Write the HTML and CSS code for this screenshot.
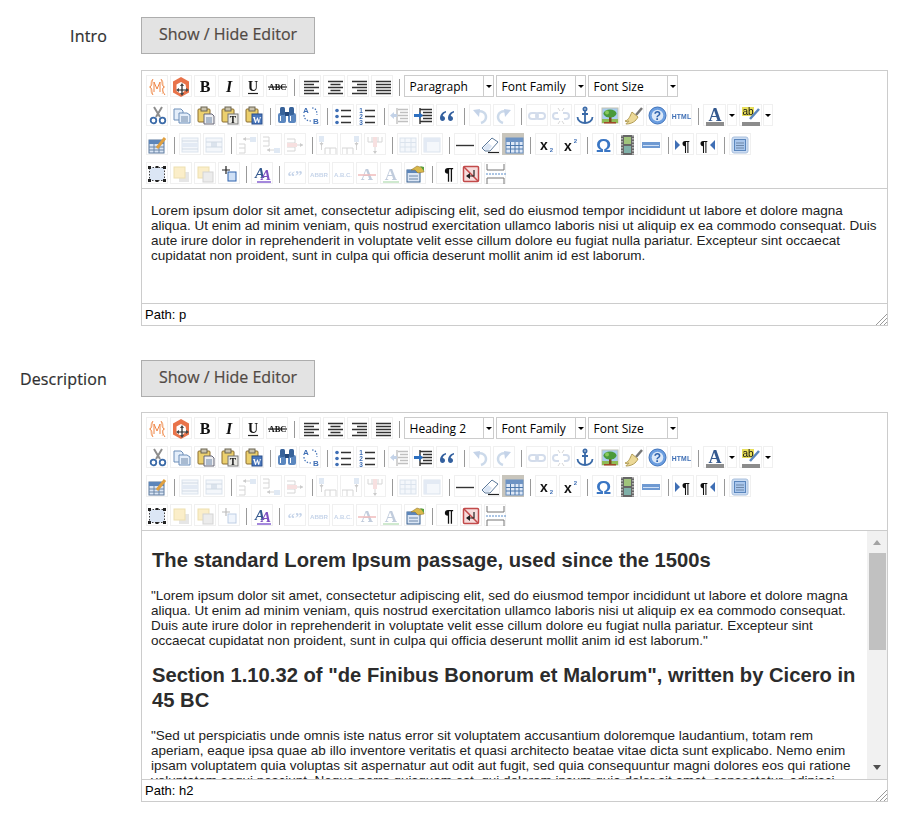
FILE: index.html
```html
<!DOCTYPE html>
<html lang="en">
<head>
  <meta charset="UTF-8" />
  <title>Editor fields</title>
  <link rel="stylesheet" href="styles.css">
</head>
<body>

  <!-- icon sheet, every toolbar button points in here -->
  <svg class="icon-sheet" width="0" height="0" aria-hidden="true">
    <defs>
      <symbol id="i-variable" viewBox="0 0 20 20"><path class="s-pale" d="M4 3C2 6 4 8 1 10c3 2 1 4 3 7M14 3c2 3 0 5 3 7-3 2-1 4-3 7"/><path class="s-orange" d="M5 2C3 5 5 8 2 10c3 2 1 5 3 8M13 2c2 3 0 6 3 8-3 2-1 5 1 8M6 15V5l3 7 3-7v10"/></symbol>
      <symbol id="i-widget" viewBox="0 0 20 20"><path fill="#e8734a" d="M9 0l8 4.500v11L9 20l-8-4.500v-11z"/><path fill="#fff" d="M9 5l4.500 2.500 1 5L9 17l-4.500-3V7.500z"/><path class="s-dark" d="M10 8v9M6 13h9"/><path fill="#444" d="M10 6l2 3H8zM17 13l-3 2v-4zM4 13l3-2v4zM10 19l-2-3h4z"/></symbol>
      <symbol id="i-bold" viewBox="0 0 20 20"><text class="t-serif" x="9" y="15" font-size="16" font-weight="700">B</text></symbol>
      <symbol id="i-italic" viewBox="0 0 20 20"><text class="t-serif" x="9" y="15" font-size="16" font-weight="700" font-style="italic">I</text></symbol>
      <symbol id="i-underline" viewBox="0 0 20 20"><text class="t-serif" x="9" y="14" font-size="14" font-weight="700">U</text><path class="s-dark" d="M4 16.500h10"/></symbol>
      <symbol id="i-strike" viewBox="0 0 20 20"><text class="t-serif" x="9.500" y="13" font-size="8.500" font-weight="700">ABC</text><path class="s-dark" d="M0 10h19"/></symbol>
      <symbol id="i-left" viewBox="0 0 20 20"><path class="s-line" d="M3 4.500h15M3 7.500h10M3 10.500h15M3 13.500h10M3 16.500h15"/></symbol>
      <symbol id="i-center" viewBox="0 0 20 20"><path class="s-line" d="M3 4.500h15M5.500 7.500h10M3 10.500h15M5.500 13.500h10M3 16.500h15"/></symbol>
      <symbol id="i-right" viewBox="0 0 20 20"><path class="s-line" d="M3 4.500h15M8 7.500h10M3 10.500h15M8 13.500h10M3 16.500h15"/></symbol>
      <symbol id="i-justify" viewBox="0 0 20 20"><path class="s-line" d="M3 4.500h15M3 7.500h15M3 10.500h15M3 13.500h15M3 16.500h15"/></symbol>

      <symbol id="i-cut" viewBox="0 0 20 20"><path class="s-grey2" d="M6 1l6 10M14 1L8 11"/><circle class="s-blue2" cx="5.500" cy="14.500" r="2.800"/><circle class="s-blue2" cx="14.500" cy="14.500" r="2.800"/></symbol>
      <symbol id="i-copy" viewBox="0 0 20 20"><path class="f-page" d="M2 3h7l2 2v9H2z"/><path class="f-page" d="M7 7h8l3 2v8H7z"/><path class="s-thin" d="M9 11h7M9 13h7M9 15h7"/></symbol>
      <symbol id="i-paste" viewBox="0 0 20 20"><rect class="f-clip" x="2" y="3" width="12" height="13" rx="1"/><rect class="f-tab" x="5" y="1" width="6" height="4"/><path class="f-page-g" d="M8 8h8l2 2v8H8z"/><path class="s-thin" d="M10 12h6M10 14h6M10 16h6"/></symbol>
      <symbol id="i-pastetext" viewBox="0 0 20 20"><rect class="f-clip" x="2" y="3" width="12" height="13" rx="1"/><rect class="f-tab" x="5" y="1" width="6" height="4"/><rect x="8" y="8" width="10" height="10" fill="#e9e9e4" stroke="#777"/><text class="t-serif" x="13" y="16.500" font-size="9.500" font-weight="700">T</text></symbol>
      <symbol id="i-pasteword" viewBox="0 0 20 20"><rect class="f-clip" x="2" y="3" width="12" height="13" rx="1"/><rect class="f-tab" x="5" y="1" width="6" height="4"/><rect x="8" y="8" width="10" height="10" fill="#4a78bd" stroke="#2a4f8c"/><text class="t-serif t-white" x="13" y="16.500" font-size="8.500" font-weight="700">W</text></symbol>
      <symbol id="i-search" viewBox="0 0 20 20"><rect x="1" y="7" width="8" height="10" rx="2" fill="#5b87bf"/><rect x="11" y="7" width="8" height="10" rx="2" fill="#5b87bf"/><rect x="3" y="1" width="5" height="8" rx="1.500" fill="#37629a"/><rect x="12" y="1" width="5" height="8" rx="1.500" fill="#37629a"/><rect x="8" y="6" width="4" height="4" fill="#24497c"/><path class="s-white" d="M3.500 10v5M13.500 10v5"/></symbol>
      <symbol id="i-replace" viewBox="0 0 20 20"><text class="t-sans t-blue" x="5" y="6.500" font-size="8" font-weight="700">A</text><text class="t-sans t-blue" x="15" y="17.500" font-size="8" font-weight="700">B</text><path class="s-dots" d="M3 9c0 4 3 6 7 6M11 2c3 0 5 2 5 7"/></symbol>
      <symbol id="i-bullist" viewBox="0 0 20 20"><path class="s-line" d="M7 4.500h10M7 10.500h10M7 16.500h10"/><circle cx="3" cy="4.500" r="1.800" fill="#3f6fb5"/><circle cx="3" cy="10.500" r="1.800" fill="#3f6fb5"/><circle cx="3" cy="16.500" r="1.800" fill="#3f6fb5"/></symbol>
      <symbol id="i-numlist" viewBox="0 0 20 20"><path class="s-line" d="M7 4.500h10M7 10.500h10M7 16.500h10"/><text class="t-sans t-blue" x="3" y="7" font-size="6.500" font-weight="700">1</text><text class="t-sans t-blue" x="3" y="13" font-size="6.500" font-weight="700">2</text><text class="t-sans t-blue" x="3" y="19" font-size="6.500" font-weight="700">3</text></symbol>
      <symbol id="i-outdent" viewBox="0 0 20 20"><path class="s-line" d="M8 3.500h10M10 6.500h8M8 9.500h10M10 12.500h8M8 15.500h10M7 2v16"/><path fill="#3f6fb5" d="M0 9.500L4 6v2h3v3H4v2z"/></symbol>
      <symbol id="i-indent" viewBox="0 0 20 20"><path class="s-line" d="M6 3.500h12M9 6.500h9M6 9.500h12M9 12.500h9M6 15.500h12M6 2v16"/><path fill="#2c6fc0" d="M9 9.500L5 6v2H0v3h5v2z"/></symbol>
      <symbol id="i-quote" viewBox="0 0 20 20"><path fill="#33609f" d="M8 5C4 6 2 9 2 12c0 2 1 3 2.500 3S7 14 7 12.500 6 10 4.700 10C5 8 6.500 7 8 6.500zM16 5c-4 1-6 4-6 7 0 2 1 3 2.500 3s2.500-1 2.500-2.500-1-2.500-2.300-2.500c.3-2 1.800-3 3.300-3.500z"/></symbol>
      <symbol id="i-undo" viewBox="0 0 20 20"><path class="s-blue3" d="M6 6c5-2 9 1 9 5 0 3-2 5-5 6"/><path fill="#3f6fb5" d="M2 4l7-1-1 8z"/></symbol>
      <symbol id="i-redo" viewBox="0 0 20 20"><path class="s-blue3" d="M12 6c-5-2-9 1-9 5 0 3 2 5 5 6"/><path fill="#3f6fb5" d="M16 4L9 3l1 8z"/></symbol>
      <symbol id="i-link" viewBox="0 0 20 20"><rect class="s-chain" x="1" y="7" width="9" height="6" rx="3"/><rect class="s-chain" x="8" y="7" width="9" height="6" rx="3"/></symbol>
      <symbol id="i-unlink" viewBox="0 0 20 20"><path class="s-chain" d="M7 13H4a3 3 0 010-6h2M11 7h3a3 3 0 010 6h-2"/><path class="s-grey1" d="M6 2l2 3M12 2l-2 3M6 18l2-3M12 18l-2-3"/></symbol>
      <symbol id="i-anchor" viewBox="0 0 20 20"><circle class="s-blue2" cx="9" cy="3" r="1.600"/><path class="s-blue2" d="M9 5v12M6 8h6M1.500 11c0 4 4 6 7.500 6s7.500-2 7.500-6"/></symbol>
      <symbol id="i-image" viewBox="0 0 20 20"><rect x="2" y="2" width="16" height="15" fill="#a9cdf0" stroke="#c4c4b4"/><rect x="2" y="13" width="16" height="4" fill="#8ebc55"/><rect x="9" y="9" width="2.500" height="7" fill="#7a4a22"/><ellipse cx="10" cy="7.500" rx="6.500" ry="4" fill="#4a9a3a"/><circle cx="7" cy="6.500" r="2" fill="#88c95c"/><path fill="#a04a28" d="M4 16h12v1.500H4z"/></symbol>
      <symbol id="i-cleanup" viewBox="0 0 20 20"><path class="s-grey3" d="M18 2l-6 7"/><path fill="#ecd998" stroke="#b09a52" d="M8 6l6 5c-2 4-6 7-12 7-1 0 3-2 3-3-1 0-3 1-4 0 4-1 5-5 7-9z"/></symbol>
      <symbol id="i-help" viewBox="0 0 20 20"><circle cx="9.500" cy="9.500" r="8.500" fill="#6b9ee0" stroke="#3f72ba"/><circle cx="9.500" cy="9.500" r="5.800" fill="#dbe8f8"/><text class="t-sans t-blue2" x="9.500" y="14" font-size="12" font-weight="700">?</text></symbol>
      <symbol id="i-html" viewBox="0 0 20 20"><text class="t-sans t-blue" x="9.500" y="12.500" font-size="6.800" font-weight="700" letter-spacing=".2">HTML</text></symbol>
      <symbol id="i-forecolor" viewBox="0 0 20 20"><text class="t-serif t-navy" x="10" y="15" font-size="18" font-weight="700">A</text><rect x="1" y="16" width="18" height="4" fill="#8c8c8c"/></symbol>
      <symbol id="i-backcolor" viewBox="0 0 20 20"><rect x="1" y="1" width="12" height="9" fill="#e8df5a"/><text class="t-sans" x="7" y="8.500" font-size="10">ab</text><path class="s-blue3" d="M18 3L9 13"/><rect x="1" y="16" width="18" height="4" fill="#8c8c8c"/></symbol>

      <symbol id="i-tableprops" viewBox="0 0 20 20"><rect x="1" y="5" width="15" height="13" fill="#dbe6f5" stroke="#5e7b9e"/><path fill="#5d86ba" d="M1 5h15v4H1z"/><path class="s-thin" d="M1 12h15M1 15h15M6 9v9M11 9v9"/><path class="s-pencil" d="M9 13l8-10"/></symbol>
      <symbol id="i-rowprops" viewBox="0 0 20 20"><rect x="1" y="3" width="16" height="14" fill="#dbe6f5" stroke="#8aa5c5"/><path fill="#a4bddc" d="M1 8h16v4H1z"/><path class="s-thin" d="M1 6h16M1 14h16"/></symbol>
      <symbol id="i-cellprops" viewBox="0 0 20 20"><rect x="1" y="3" width="16" height="14" fill="#dbe6f5" stroke="#8aa5c5"/><rect x="6" y="7" width="6" height="5" fill="#8aa5c5"/><path class="s-thin" d="M1 7h16M1 12h16"/></symbol>
      <symbol id="i-rowbefore" viewBox="0 0 20 20"><path class="s-grey1" d="M1 9h6v9H1M1 13h6"/><rect x="12" y="2" width="6" height="5" fill="#9cb9dc"/><path class="s-grey1" d="M5 4h7"/><path fill="#555" d="M5 4l3-2v4z"/></symbol>
      <symbol id="i-rowafter" viewBox="0 0 20 20"><path class="s-grey1" d="M1 2h6v9H1M1 6h6"/><rect x="12" y="13" width="6" height="5" fill="#9cb9dc"/><path class="s-grey1" d="M5 15h7"/><path fill="#555" d="M5 15l3-2v4z"/></symbol>
      <symbol id="i-rowdel" viewBox="0 0 20 20"><path class="s-grey1" d="M1 4h8v12H1M1 8h8M1 12h8"/><rect x="1" y="8" width="10" height="4" fill="#e89a9a"/><path class="s-grey1" d="M11 10h6"/><path fill="#555" d="M17 10l-3-2v4z"/></symbol>
      <symbol id="i-colbefore" viewBox="0 0 20 20"><path class="s-grey1" d="M7 19v-6h11v6M12 13v6"/><rect x="1" y="1" width="5" height="6" fill="#9cb9dc"/><path class="s-grey1" d="M3.500 7v8"/><path fill="#555" d="M3.500 11l-2-3h4z"/></symbol>
      <symbol id="i-colafter" viewBox="0 0 20 20"><path class="s-grey1" d="M0 19v-6h11v6M5 13v6"/><rect x="12" y="1" width="5" height="6" fill="#9cb9dc"/><path class="s-grey1" d="M14.500 7v8"/><path fill="#555" d="M14.500 11l-2-3h4z"/></symbol>
      <symbol id="i-coldel" viewBox="0 0 20 20"><path class="s-grey1" d="M2 2v5h14V2M6 2v5M12 2v5"/><rect x="7" y="2" width="4" height="10" fill="#e89a9a"/><path class="s-grey1" d="M9 12v6"/><path fill="#555" d="M9 19l-2-3h4z"/></symbol>
      <symbol id="i-split" viewBox="0 0 20 20"><rect x="1" y="3" width="16" height="14" fill="#dbe6f5" stroke="#8aa5c5"/><path class="s-grid" d="M1 7.500h16M1 12h16M6 3v14M12 3v14"/></symbol>
      <symbol id="i-merge" viewBox="0 0 20 20"><rect x="1" y="3" width="16" height="14" fill="#dbe6f5" stroke="#8aa5c5"/><path fill="#a4bddc" d="M1 3h16v4H1zM1 7h3v10H1z"/></symbol>
      <symbol id="i-hr" viewBox="0 0 20 20"><path class="s-line" d="M0 10.500h18"/></symbol>
      <symbol id="i-eraser" viewBox="0 0 20 20"><path fill="#fff" stroke="#5c7999" d="M12 3l6 4-8 9H5l-3-3z"/><path fill="#dbe6f5" d="M3 13l5-5 4 3-3 4H5z"/><path class="s-dark" d="M8 17.500h11"/></symbol>
      <symbol id="i-visualaid" viewBox="0 0 20 20"><rect x="2" y="3" width="17" height="15" fill="#dfe9f7" stroke="#6d93c4"/><path fill="#6d93c4" d="M2 3h17v4H2z"/><path class="s-grid2" d="M2 10.500h17M2 14h17M6.500 7v11M11 7v11M15 7v11"/></symbol>
      <symbol id="i-sub" viewBox="0 0 20 20"><text class="t-sans" x="7" y="14.500" font-size="14" font-weight="700">x</text><text class="t-sans t-blue" x="14.500" y="17" font-size="6" font-weight="700">2</text></symbol>
      <symbol id="i-sup" viewBox="0 0 20 20"><text class="t-sans" x="7" y="16" font-size="14" font-weight="700">x</text><text class="t-sans t-blue" x="14.500" y="8" font-size="6" font-weight="700">2</text></symbol>
      <symbol id="i-charmap" viewBox="0 0 20 20"><text class="t-sans t-blue3" x="9.500" y="16.500" font-size="19" font-weight="700">Ω</text></symbol>
      <symbol id="i-media" viewBox="0 0 20 20"><rect x="3" y="0" width="13" height="20" fill="#666"/><rect x="6" y="2" width="7" height="7" fill="#a0c47c"/><rect x="6" y="11" width="7" height="7" fill="#7fb0a8"/><path stroke="#ccc" stroke-width="1.500" stroke-dasharray="1.500 1.500" d="M4 0v20M15 0v20"/></symbol>
      <symbol id="i-advhr" viewBox="0 0 20 20"><rect x="0" y="7" width="18" height="6" fill="#6f9ad2"/><path stroke="#cfe0f6" d="M1 10.500h16"/></symbol>
      <symbol id="i-ltr" viewBox="0 0 20 20"><path fill="#3f6fb5" d="M1 5l5 5-5 5z"/><text class="t-sans" x="12" y="15.500" font-size="14" font-weight="700">¶</text></symbol>
      <symbol id="i-rtl" viewBox="0 0 20 20"><path fill="#3f6fb5" d="M17 5l-5 5 5 5z"/><text class="t-sans" x="6" y="15.500" font-size="14" font-weight="700">¶</text></symbol>
      <symbol id="i-fullscreen" viewBox="0 0 20 20"><rect x="1" y="2" width="16" height="16" rx="2" fill="#cbdcf2" stroke="#a9bfdc"/><rect x="3.500" y="4.500" width="11" height="11" fill="#a9c6ec" stroke="#5a86bd"/><path class="s-thin" d="M5 8h8M5 10.500h8M5 13h8"/></symbol>

      <symbol id="i-layer" viewBox="0 0 20 20"><rect x="1.500" y="3.500" width="15" height="13" fill="#dbe6f5" stroke="#444" stroke-dasharray="1.500 1.500"/><path fill="#222" d="M0 2h3v3H0zM15 2h3v3h-3zM0 15h3v3H0zM15 15h3v3h-3zM7.500 2h3v2h-3zM7.500 16h3v2h-3z"/></symbol>
      <symbol id="i-forward" viewBox="0 0 20 20"><rect x="7" y="8" width="10" height="10" fill="#e6e6e6"/><rect x="2" y="3" width="11" height="11" fill="#fbeec9" stroke="#eddfb0"/></symbol>
      <symbol id="i-backward" viewBox="0 0 20 20"><rect x="2" y="3" width="11" height="11" fill="#fbeec9" stroke="#eddfb0"/><rect x="7" y="8" width="10" height="10" fill="#ececec" stroke="#d4d4d4"/></symbol>
      <symbol id="i-absolute" viewBox="0 0 20 20"><path class="s-dark" d="M6 2v8M2 6h8"/><rect x="8" y="8" width="8" height="9" fill="#cfe0f6" stroke="#2f63ad"/></symbol>
      <symbol id="i-styleprops" viewBox="0 0 20 20"><text class="t-serif t-navy" x="7" y="14" font-size="15" font-weight="700" font-style="italic">A</text><text class="t-serif t-purple" x="13" y="16" font-size="15" font-weight="700" font-style="italic">A</text><rect x="4" y="17" width="14" height="2" fill="#a488dc"/></symbol>
      <symbol id="i-cite" viewBox="0 0 20 20"><text class="t-serif t-blue" x="9" y="17" font-size="15" font-weight="700">“”</text></symbol>
      <symbol id="i-abbr" viewBox="0 0 20 20"><text class="t-sans t-blue" x="9" y="13" font-size="6.200" font-weight="700">ABBR</text></symbol>
      <symbol id="i-acronym" viewBox="0 0 20 20"><text class="t-sans t-blue" x="9" y="13" font-size="6" font-weight="700">A.B.C.</text></symbol>
      <symbol id="i-del" viewBox="0 0 20 20"><text class="t-serif t-navy" x="9" y="16" font-size="17" font-weight="700">A</text><path stroke="#d02020" stroke-width="1.500" d="M0 11h18"/></symbol>
      <symbol id="i-ins" viewBox="0 0 20 20"><text class="t-serif t-navy" x="9" y="16" font-size="17" font-weight="700">A</text><path stroke="#2fa02f" stroke-width="1.500" d="M1 18h16"/></symbol>
      <symbol id="i-attribs" viewBox="0 0 20 20"><rect x="1" y="6" width="13" height="12" fill="#dbe6f5" stroke="#39608f"/><path fill="#5d86ba" d="M1 6h13v3H1z"/><path class="s-thin" d="M3 12h9M3 15h9"/><path fill="#d9b84a" stroke="#8a6d2f" stroke-width=".5" d="M5 6l6-4 6 2 1 4-6 1-3-3z"/><path fill="#5aa03c" d="M14 2l4 1v4z"/></symbol>
      <symbol id="i-pilcrow" viewBox="0 0 20 20"><text class="t-sans" x="11" y="16" font-size="17" font-weight="700">¶</text></symbol>
      <symbol id="i-nbsp" viewBox="0 0 20 20"><rect x="1.500" y="2.500" width="15" height="15" rx="1" fill="#f6dcdc" stroke="#c24a4a" stroke-width="1.500"/><path stroke="#c24a4a" stroke-width="1.500" d="M2 3l14 14"/><path class="s-dark" d="M12 6v6H5"/><path fill="#222" d="M4 12l4-3v6z"/></symbol>
      <symbol id="i-pagebreak" viewBox="0 0 20 20"><path class="s-grey1" d="M1 0v6h17V0M1 20v-6h17v6"/><path stroke="#5b8dca" stroke-dasharray="2 1" d="M0 10h20"/></symbol>
    </defs>
  </svg>

  <div class="field">
    <div class="field-label">Intro</div>
    <div class="field-main">
      <button class="toggle">Show / Hide Editor</button>
      <div class="editor editor-intro">
        <div class="toolbar">
          <div class="tb-row">
            <span class="tb"><svg><use href="#i-variable"/></svg></span>
            <span class="tb"><svg><use href="#i-widget"/></svg></span>
            <span class="tb"><svg><use href="#i-bold"/></svg></span>
            <span class="tb"><svg><use href="#i-italic"/></svg></span>
            <span class="tb"><svg><use href="#i-underline"/></svg></span>
            <span class="tb"><svg><use href="#i-strike"/></svg></span>
            <span class="sep"></span>
            <span class="tb"><svg><use href="#i-left"/></svg></span>
            <span class="tb"><svg><use href="#i-center"/></svg></span>
            <span class="tb"><svg><use href="#i-right"/></svg></span>
            <span class="tb"><svg><use href="#i-justify"/></svg></span>
            <span class="sep"></span>
            <span class="list"><span class="list-text">Paragraph</span><span class="arrow"></span></span>
            <span class="list"><span class="list-text">Font Family</span><span class="arrow"></span></span>
            <span class="list"><span class="list-text">Font Size</span><span class="arrow"></span></span>
          </div>
          <div class="tb-row">
            <span class="tb"><svg><use href="#i-cut"/></svg></span>
            <span class="tb"><svg><use href="#i-copy"/></svg></span>
            <span class="tb"><svg><use href="#i-paste"/></svg></span>
            <span class="tb"><svg><use href="#i-pastetext"/></svg></span>
            <span class="tb"><svg><use href="#i-pasteword"/></svg></span>
            <span class="sep"></span>
            <span class="tb"><svg><use href="#i-search"/></svg></span>
            <span class="tb"><svg><use href="#i-replace"/></svg></span>
            <span class="sep"></span>
            <span class="tb"><svg><use href="#i-bullist"/></svg></span>
            <span class="tb"><svg><use href="#i-numlist"/></svg></span>
            <span class="sep"></span>
            <span class="tb off"><svg><use href="#i-outdent"/></svg></span>
            <span class="tb"><svg><use href="#i-indent"/></svg></span>
            <span class="tb"><svg><use href="#i-quote"/></svg></span>
            <span class="sep"></span>
            <span class="tb off"><svg><use href="#i-undo"/></svg></span>
            <span class="tb off"><svg><use href="#i-redo"/></svg></span>
            <span class="sep"></span>
            <span class="tb off"><svg><use href="#i-link"/></svg></span>
            <span class="tb off"><svg><use href="#i-unlink"/></svg></span>
            <span class="tb"><svg><use href="#i-anchor"/></svg></span>
            <span class="tb"><svg><use href="#i-image"/></svg></span>
            <span class="tb"><svg><use href="#i-cleanup"/></svg></span>
            <span class="tb"><svg><use href="#i-help"/></svg></span>
            <span class="tb"><svg><use href="#i-html"/></svg></span>
            <span class="sep"></span>
            <span class="split"><span class="tb tb-wide"><svg><use href="#i-forecolor"/></svg></span><span class="tb-arrow"><span class="arrow-mark"></span></span></span>
            <span class="split"><span class="tb tb-wide"><svg><use href="#i-backcolor"/></svg></span><span class="tb-arrow"><span class="arrow-mark"></span></span></span>
          </div>
          <div class="tb-row">
            <span class="tb"><svg><use href="#i-tableprops"/></svg></span>
            <span class="sep"></span>
            <span class="tb off"><svg><use href="#i-rowprops"/></svg></span>
            <span class="tb off"><svg><use href="#i-cellprops"/></svg></span>
            <span class="sep"></span>
            <span class="tb off"><svg><use href="#i-rowbefore"/></svg></span>
            <span class="tb off"><svg><use href="#i-rowafter"/></svg></span>
            <span class="tb off"><svg><use href="#i-rowdel"/></svg></span>
            <span class="sep"></span>
            <span class="tb off"><svg><use href="#i-colbefore"/></svg></span>
            <span class="tb off"><svg><use href="#i-colafter"/></svg></span>
            <span class="tb off"><svg><use href="#i-coldel"/></svg></span>
            <span class="sep"></span>
            <span class="tb off"><svg><use href="#i-split"/></svg></span>
            <span class="tb off"><svg><use href="#i-merge"/></svg></span>
            <span class="sep"></span>
            <span class="tb"><svg><use href="#i-hr"/></svg></span>
            <span class="tb"><svg><use href="#i-eraser"/></svg></span>
            <span class="tb active"><svg><use href="#i-visualaid"/></svg></span>
            <span class="sep"></span>
            <span class="tb"><svg><use href="#i-sub"/></svg></span>
            <span class="tb"><svg><use href="#i-sup"/></svg></span>
            <span class="sep"></span>
            <span class="tb"><svg><use href="#i-charmap"/></svg></span>
            <span class="tb"><svg><use href="#i-media"/></svg></span>
            <span class="tb"><svg><use href="#i-advhr"/></svg></span>
            <span class="sep"></span>
            <span class="tb"><svg><use href="#i-ltr"/></svg></span>
            <span class="tb"><svg><use href="#i-rtl"/></svg></span>
            <span class="sep"></span>
            <span class="tb"><svg><use href="#i-fullscreen"/></svg></span>
          </div>
          <div class="tb-row">
            <span class="tb"><svg><use href="#i-layer"/></svg></span>
            <span class="tb"><svg><use href="#i-forward"/></svg></span>
            <span class="tb"><svg><use href="#i-backward"/></svg></span>
            <span class="tb"><svg><use href="#i-absolute"/></svg></span>
            <span class="sep"></span>
            <span class="tb"><svg><use href="#i-styleprops"/></svg></span>
            <span class="sep"></span>
            <span class="tb off"><svg><use href="#i-cite"/></svg></span>
            <span class="tb off"><svg><use href="#i-abbr"/></svg></span>
            <span class="tb off"><svg><use href="#i-acronym"/></svg></span>
            <span class="tb off"><svg><use href="#i-del"/></svg></span>
            <span class="tb off"><svg><use href="#i-ins"/></svg></span>
            <span class="tb"><svg><use href="#i-attribs"/></svg></span>
            <span class="sep"></span>
            <span class="tb"><svg><use href="#i-pilcrow"/></svg></span>
            <span class="tb"><svg><use href="#i-nbsp"/></svg></span>
            <span class="tb"><svg><use href="#i-pagebreak"/></svg></span>
          </div>
        </div>
        <div class="content">
          <div class="content-text">
            <p>Lorem ipsum dolor sit amet, consectetur adipiscing elit, sed do eiusmod tempor incididunt ut labore et dolore magna aliqua. Ut enim ad minim veniam, quis nostrud exercitation ullamco laboris nisi ut aliquip ex ea commodo consequat. Duis aute irure dolor in reprehenderit in voluptate velit esse cillum dolore eu fugiat nulla pariatur. Excepteur sint occaecat cupidatat non proident, sunt in culpa qui officia deserunt mollit anim id est laborum.</p>
          </div>
        </div>
        <div class="status">
          <span>Path: p</span>
          <svg class="grip" width="12" height="12" viewBox="0 0 12 12"><path d="M12 1L1 12M12 5l-7 7M12 9l-3 3"/></svg>
        </div>
      </div>
    </div>
  </div>

  <div class="field">
    <div class="field-label">Description</div>
    <div class="field-main">
      <button class="toggle">Show / Hide Editor</button>
      <div class="editor editor-desc">
        <div class="toolbar">
          <div class="tb-row">
            <span class="tb"><svg><use href="#i-variable"/></svg></span>
            <span class="tb"><svg><use href="#i-widget"/></svg></span>
            <span class="tb"><svg><use href="#i-bold"/></svg></span>
            <span class="tb"><svg><use href="#i-italic"/></svg></span>
            <span class="tb"><svg><use href="#i-underline"/></svg></span>
            <span class="tb"><svg><use href="#i-strike"/></svg></span>
            <span class="sep"></span>
            <span class="tb"><svg><use href="#i-left"/></svg></span>
            <span class="tb"><svg><use href="#i-center"/></svg></span>
            <span class="tb"><svg><use href="#i-right"/></svg></span>
            <span class="tb"><svg><use href="#i-justify"/></svg></span>
            <span class="sep"></span>
            <span class="list"><span class="list-text">Heading 2</span><span class="arrow"></span></span>
            <span class="list"><span class="list-text">Font Family</span><span class="arrow"></span></span>
            <span class="list"><span class="list-text">Font Size</span><span class="arrow"></span></span>
          </div>
          <div class="tb-row">
            <span class="tb"><svg><use href="#i-cut"/></svg></span>
            <span class="tb"><svg><use href="#i-copy"/></svg></span>
            <span class="tb"><svg><use href="#i-paste"/></svg></span>
            <span class="tb"><svg><use href="#i-pastetext"/></svg></span>
            <span class="tb"><svg><use href="#i-pasteword"/></svg></span>
            <span class="sep"></span>
            <span class="tb"><svg><use href="#i-search"/></svg></span>
            <span class="tb"><svg><use href="#i-replace"/></svg></span>
            <span class="sep"></span>
            <span class="tb"><svg><use href="#i-bullist"/></svg></span>
            <span class="tb"><svg><use href="#i-numlist"/></svg></span>
            <span class="sep"></span>
            <span class="tb off"><svg><use href="#i-outdent"/></svg></span>
            <span class="tb"><svg><use href="#i-indent"/></svg></span>
            <span class="tb"><svg><use href="#i-quote"/></svg></span>
            <span class="sep"></span>
            <span class="tb off"><svg><use href="#i-undo"/></svg></span>
            <span class="tb off"><svg><use href="#i-redo"/></svg></span>
            <span class="sep"></span>
            <span class="tb off"><svg><use href="#i-link"/></svg></span>
            <span class="tb off"><svg><use href="#i-unlink"/></svg></span>
            <span class="tb"><svg><use href="#i-anchor"/></svg></span>
            <span class="tb"><svg><use href="#i-image"/></svg></span>
            <span class="tb"><svg><use href="#i-cleanup"/></svg></span>
            <span class="tb"><svg><use href="#i-help"/></svg></span>
            <span class="tb"><svg><use href="#i-html"/></svg></span>
            <span class="sep"></span>
            <span class="split"><span class="tb tb-wide"><svg><use href="#i-forecolor"/></svg></span><span class="tb-arrow"><span class="arrow-mark"></span></span></span>
            <span class="split"><span class="tb tb-wide"><svg><use href="#i-backcolor"/></svg></span><span class="tb-arrow"><span class="arrow-mark"></span></span></span>
          </div>
          <div class="tb-row">
            <span class="tb"><svg><use href="#i-tableprops"/></svg></span>
            <span class="sep"></span>
            <span class="tb off"><svg><use href="#i-rowprops"/></svg></span>
            <span class="tb off"><svg><use href="#i-cellprops"/></svg></span>
            <span class="sep"></span>
            <span class="tb off"><svg><use href="#i-rowbefore"/></svg></span>
            <span class="tb off"><svg><use href="#i-rowafter"/></svg></span>
            <span class="tb off"><svg><use href="#i-rowdel"/></svg></span>
            <span class="sep"></span>
            <span class="tb off"><svg><use href="#i-colbefore"/></svg></span>
            <span class="tb off"><svg><use href="#i-colafter"/></svg></span>
            <span class="tb off"><svg><use href="#i-coldel"/></svg></span>
            <span class="sep"></span>
            <span class="tb off"><svg><use href="#i-split"/></svg></span>
            <span class="tb off"><svg><use href="#i-merge"/></svg></span>
            <span class="sep"></span>
            <span class="tb"><svg><use href="#i-hr"/></svg></span>
            <span class="tb"><svg><use href="#i-eraser"/></svg></span>
            <span class="tb active"><svg><use href="#i-visualaid"/></svg></span>
            <span class="sep"></span>
            <span class="tb"><svg><use href="#i-sub"/></svg></span>
            <span class="tb"><svg><use href="#i-sup"/></svg></span>
            <span class="sep"></span>
            <span class="tb"><svg><use href="#i-charmap"/></svg></span>
            <span class="tb"><svg><use href="#i-media"/></svg></span>
            <span class="tb"><svg><use href="#i-advhr"/></svg></span>
            <span class="sep"></span>
            <span class="tb"><svg><use href="#i-ltr"/></svg></span>
            <span class="tb"><svg><use href="#i-rtl"/></svg></span>
            <span class="sep"></span>
            <span class="tb"><svg><use href="#i-fullscreen"/></svg></span>
          </div>
          <div class="tb-row">
            <span class="tb"><svg><use href="#i-layer"/></svg></span>
            <span class="tb"><svg><use href="#i-forward"/></svg></span>
            <span class="tb"><svg><use href="#i-backward"/></svg></span>
            <span class="tb off"><svg><use href="#i-absolute"/></svg></span>
            <span class="sep"></span>
            <span class="tb"><svg><use href="#i-styleprops"/></svg></span>
            <span class="sep"></span>
            <span class="tb off"><svg><use href="#i-cite"/></svg></span>
            <span class="tb off"><svg><use href="#i-abbr"/></svg></span>
            <span class="tb off"><svg><use href="#i-acronym"/></svg></span>
            <span class="tb off"><svg><use href="#i-del"/></svg></span>
            <span class="tb off"><svg><use href="#i-ins"/></svg></span>
            <span class="tb"><svg><use href="#i-attribs"/></svg></span>
            <span class="sep"></span>
            <span class="tb"><svg><use href="#i-pilcrow"/></svg></span>
            <span class="tb"><svg><use href="#i-nbsp"/></svg></span>
            <span class="tb"><svg><use href="#i-pagebreak"/></svg></span>
          </div>
        </div>
        <div class="content">
          <div class="content-text">
            <h2>The standard Lorem Ipsum passage, used since the 1500s</h2>
            <p>"Lorem ipsum dolor sit amet, consectetur adipiscing elit, sed do eiusmod tempor incididunt ut labore et dolore magna aliqua. Ut enim ad minim veniam, quis nostrud exercitation ullamco laboris nisi ut aliquip ex ea commodo consequat. Duis aute irure dolor in reprehenderit in voluptate velit esse cillum dolore eu fugiat nulla pariatur. Excepteur sint occaecat cupidatat non proident, sunt in culpa qui officia deserunt mollit anim id est laborum."</p>
            <h2>Section 1.10.32 of "de Finibus Bonorum et Malorum", written by Cicero in 45 BC</h2>
            <p>"Sed ut perspiciatis unde omnis iste natus error sit voluptatem accusantium doloremque laudantium, totam rem aperiam, eaque ipsa quae ab illo inventore veritatis et quasi architecto beatae vitae dicta sunt explicabo. Nemo enim ipsam voluptatem quia voluptas sit aspernatur aut odit aut fugit, sed quia consequuntur magni dolores eos qui ratione voluptatem sequi nesciunt. Neque porro quisquam est, qui dolorem ipsum quia dolor sit amet, consectetur, adipisci velit, sed quia non numquam eius modi tempora incidunt ut labore et dolore magnam aliquam quaerat voluptatem."</p>
          </div>
          <div class="scrollbar">
            <span class="sb-up"></span>
            <span class="sb-thumb"></span>
            <span class="sb-down"></span>
          </div>
        </div>
        <div class="status">
          <span>Path: h2</span>
          <svg class="grip" width="12" height="12" viewBox="0 0 12 12"><path d="M12 1L1 12M12 5l-7 7M12 9l-3 3"/></svg>
        </div>
      </div>
    </div>
  </div>

</body>
</html>
```

FILE: styles.css
```css
body {
  margin: 0;
  padding: 17px 0 0;
  background: #fff;
  font-family: "Open Sans", sans-serif;
  color: #303030;
}

.icon-sheet {
  display: block;
  height: 0;
}

/* Field layout */
.field {
  display: grid;
  grid-template-columns: 107px 747px;
  column-gap: 34px;
  margin-bottom: 34px;
}

.field-label {
  text-align: right;
  font-size: 16px;
  letter-spacing: .15px;
  -webkit-text-stroke: .2px;
  line-height: 22px;
  padding-top: 8px;
}

.toggle {
  display: block;
  width: 174px;
  height: 37px;
  padding: 0 0 3px;
  background: #e3e3e3;
  border: 1px solid #adadad;
  border-radius: 0;
  color: #514943;
  font-family: "Open Sans", sans-serif;
  font-size: 16px;
  -webkit-text-stroke: .2px;
}

/* Editor box */
.editor {
  display: flex;
  flex-direction: column;
  margin-top: 16px;
  border: 1px solid #ccc;
  font-family: "Liberation Sans", Arial, sans-serif;
  font-size: 13px;
}
.editor-intro { height: 254px; }
.editor-desc { height: 388px; margin-top: 15px; }

.toolbar {
  display: flex;
  flex-direction: column;
  gap: 7px;
  padding: 4px;
  border-bottom: 1px solid #ccc;
}

.tb-row {
  display: flex;
  gap: 2px;
  height: 22px;
}

.tb {
  box-sizing: border-box;
  display: block;
  width: 22px;
  height: 22px;
  border: 1px solid #f0f0f0;
  background: #fff;
}
.tb svg {
  display: block;
  width: 20px;
  height: 20px;
  margin: 1px 0 0 1px;
  filter: blur(.35px);
}
.tb.off svg { opacity: .3; }
.tb.active {
  background: #c8c5bc;
  border-color: #c8c5bc;
}
.tb-wide { width: 23px; }

.sep {
  width: 1px;
  height: 17px;
  margin: 4px 1.8px 0 4px;
  background: #999;
}

/* Dropdowns */
.list {
  box-sizing: border-box;
  display: flex;
  width: 90px;
  height: 22px;
}
.list-text {
  box-sizing: border-box;
  width: 80px;
  padding-left: 5px;
  border: 1px solid #ccc;
  color: #000;
  font-family: "Open Sans", sans-serif;
  font-size: 12px;
  line-height: 21px;
}
.arrow {
  position: relative;
  box-sizing: border-box;
  width: 11px;
  margin-left: -1px;
  border: 1px solid #ccc;
}
.arrow::after {
  content: "";
  position: absolute;
  left: 2px;
  top: 9px;
  border: 3px solid transparent;
  border-top: 3px solid #000;
  border-bottom: 0;
}

.split {
  display: flex;
  gap: 1px;
}
.tb-arrow {
  box-sizing: border-box;
  display: flex;
  justify-content: center;
  padding-top: 9px;
  width: 10px;
  height: 22px;
  border: 1px solid #f0f0f0;
}
.arrow-mark {
  width: 0;
  height: 0;
  border: 3px solid transparent;
  border-top: 3px solid #000;
  border-bottom: 0;
}

/* Content area */
.content {
  display: flex;
  flex: 1;
  min-height: 0;
  overflow: hidden;
}
.content-text {
  flex: 1;
  min-width: 0;
  overflow: hidden;
  padding: 14px 5px 0 9px;
  color: #222;
  font-size: 13.5px;
  line-height: 15px;
}
.content-text p {
  margin: 0 0 15px;
}
.content-text h2 {
  margin: 0 0 15px 1px;
  font-size: 20.2px;
  line-height: 25px;
  color: #2c2c2c;
}
.editor-desc .content-text {
  padding: 17px 9px 0 9px;
}

.scrollbar {
  display: flex;
  flex-direction: column;
  align-items: center;
  flex: none;
  width: 20px;
  background: #f1f1f1;
}
.sb-up {
  margin-top: 9px;
  border: 4px solid transparent;
  border-bottom: 5px solid #a3a3a3;
  border-top: 0;
}
.sb-thumb {
  width: 17px;
  height: 97px;
  margin-top: 8px;
  background: #c1c1c1;
}
.sb-down {
  margin-top: auto;
  margin-bottom: 9px;
  border: 4px solid transparent;
  border-top: 5px solid #505050;
  border-bottom: 0;
}

.status {
  display: flex;
  justify-content: space-between;
  align-items: flex-end;
  height: 21px;
  padding-left: 3px;
  border-top: 1px solid #ccc;
  color: #000;
  line-height: 20px;
}
.status span { align-self: center; }
.grip path {
  fill: none;
  stroke: #9a9a9a;
  stroke-width: 1;
}

/* Strokes shared by the toolbar icons */
.s-orange { fill: none; stroke: #ee8445; stroke-width: 1; }
.s-pale { fill: none; stroke: #f8c8a4; stroke-width: 1; }
.s-dark { fill: none; stroke: #222; stroke-width: 1.2; }
.s-line { fill: none; stroke: #333; stroke-width: 1.4; }
.s-thin { fill: none; stroke: #6d87a8; stroke-width: 1; }
.s-white { fill: none; stroke: #fff; stroke-width: 1; }
.s-grey1 { fill: none; stroke: #777; stroke-width: 1; }
.s-grey2 { fill: none; stroke: #8d8d8d; stroke-width: 2; }
.s-grey3 { fill: none; stroke: #777; stroke-width: 2.5; }
.s-blue2 { fill: none; stroke: #3a6aa8; stroke-width: 1.8; }
.s-blue3 { fill: none; stroke: #5a86bd; stroke-width: 2.5; }
.s-chain { fill: none; stroke: #6f8fc0; stroke-width: 2; }
.s-dots { fill: none; stroke: #3f6fb5; stroke-width: 1.2; stroke-dasharray: 1.500 1.500; }
.s-grid { fill: none; stroke: #8aa5c5; stroke-width: 1; }
.s-grid2 { fill: none; stroke: #4d78ad; stroke-width: 1; }
.s-pencil { fill: none; stroke: #e0a040; stroke-width: 3; }
.f-page { fill: #e4eefa; stroke: #6c8eb8; stroke-width: 1; }
.f-page-g { fill: #ecedf0; stroke: #667; stroke-width: 1; }
.f-clip { fill: #ecd06e; stroke: #8a6d2f; stroke-width: 1; }
.f-tab { fill: #c9c2ad; stroke: #6b6450; stroke-width: 1; }

.t-serif {
  font-family: "Liberation Serif", serif;
  text-anchor: middle;
  fill: #111;
}
.t-sans {
  font-family: "Liberation Sans", sans-serif;
  text-anchor: middle;
  fill: #111;
}
.t-white { fill: #fff; }
.t-blue { fill: #3f6fb5; }
.t-blue2 { fill: #2f63ad; }
.t-blue3 { fill: #3a76c4; }
.t-navy { fill: #34598f; }
.t-purple { fill: #7d4fc0; }
```
